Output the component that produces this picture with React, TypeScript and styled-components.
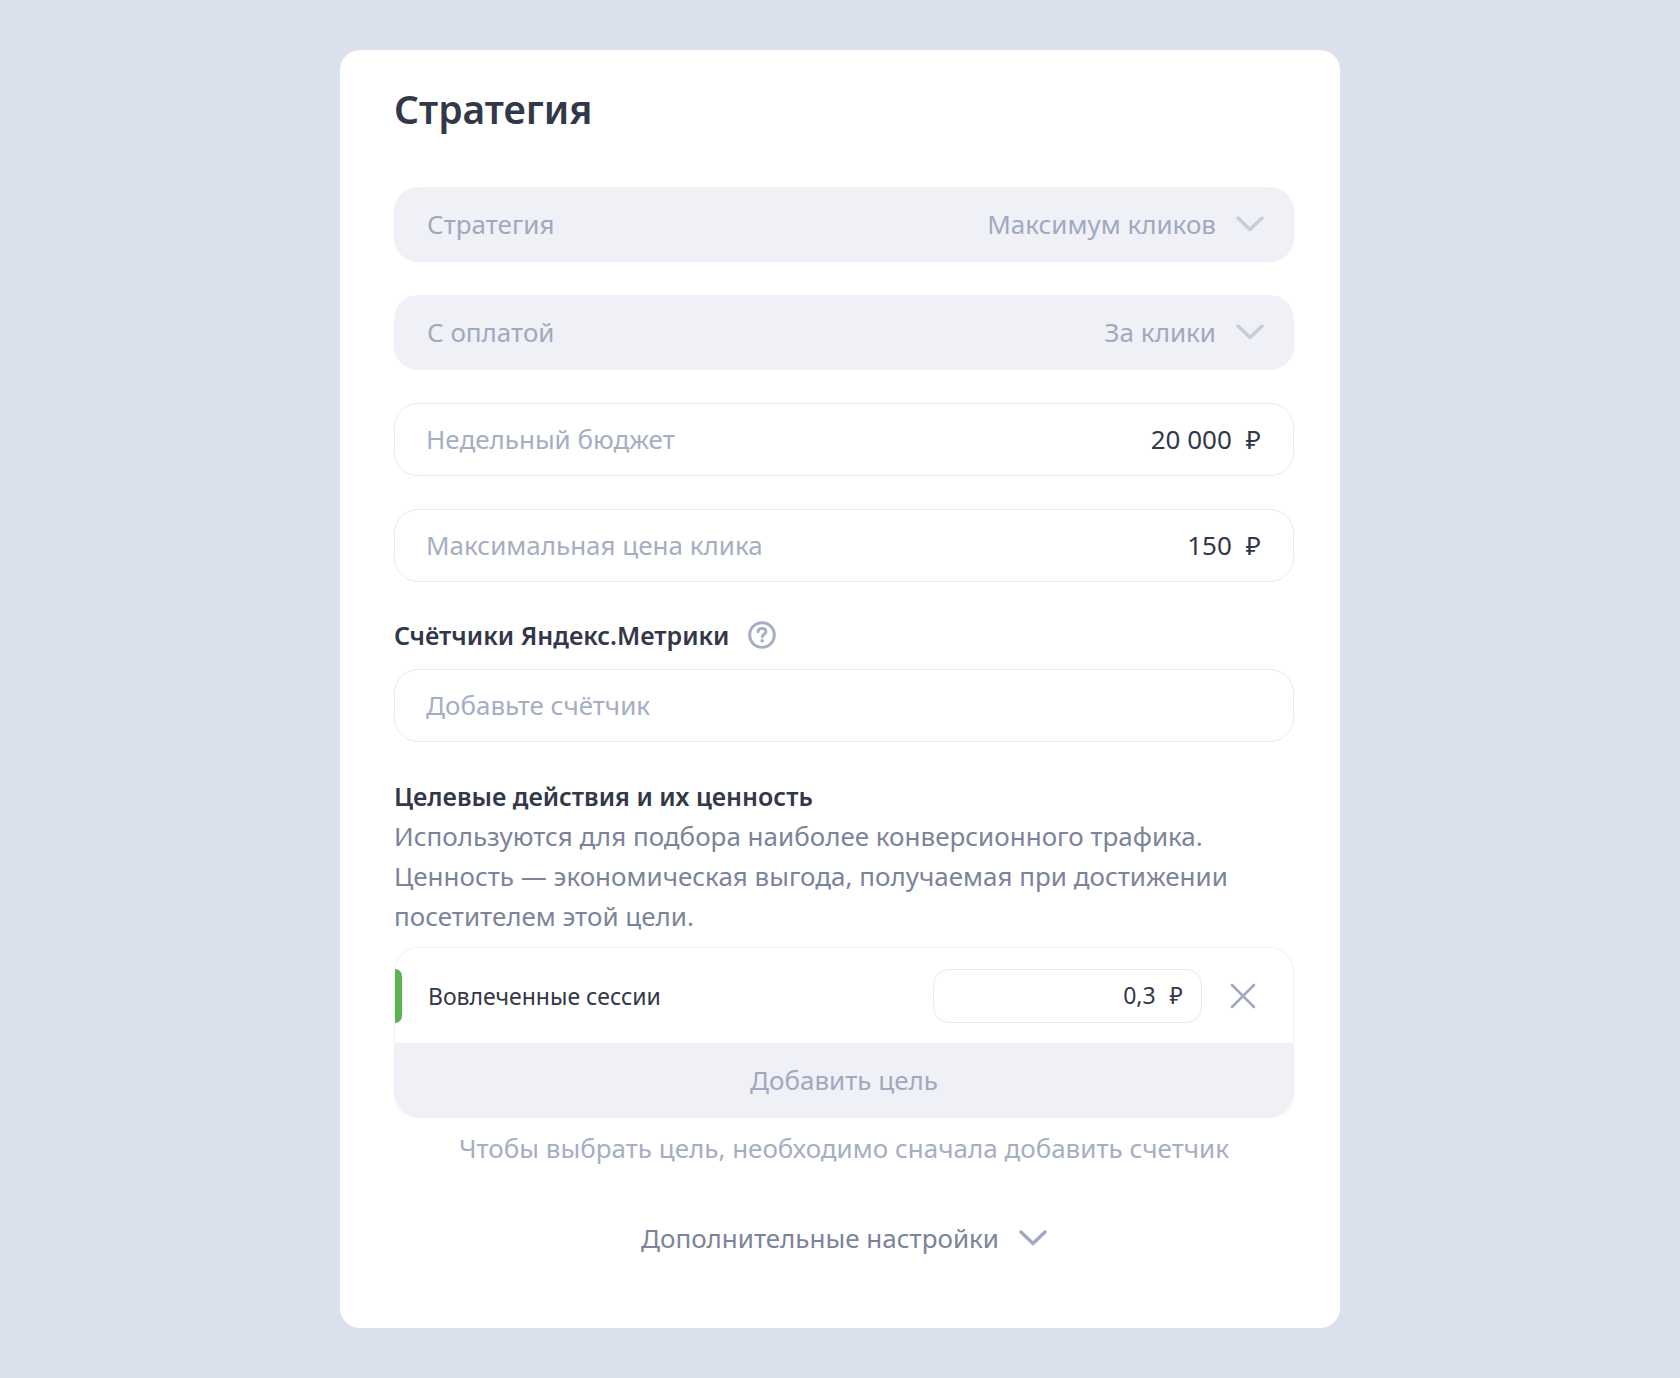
import React, { useState } from 'react';
import styled, { createGlobalStyle } from 'styled-components';

const color = {
  page: '#dae0ec',
  card: '#ffffff',
  fill: '#f0f1f6',
  line: '#e9eaf2',
  text: '#333848',
  body: '#7b849a',
  muted: '#a0a9bf',
  faint: '#a6aec2',
  chevron: '#c5ccda',
  green: '#5bb354',
};

const GlobalStyle = createGlobalStyle`
  *, *::before, *::after {
    box-sizing: border-box;
  }
  body {
    margin: 0;
    background: ${color.page};
    color: ${color.text};
    font-family: 'Noto Sans', 'Open Sans', sans-serif;
    font-size: 26px;
    line-height: 40px;
  }
  button, input, select {
    margin: 0;
    padding: 0;
    border: 0;
    background: none;
    font: inherit;
    color: inherit;
  }
`;

const Page = styled.main`
  padding: 50px 24px;
`;

const Card = styled.form`
  max-width: 1000px;
  margin: 0 auto;
  padding: 34px 46px 70px 54px;
  border-radius: 20px;
  background: ${color.card};
`;

const Heading = styled.h1`
  margin: 0 0 53px;
  font-size: 39px;
  line-height: 50px;
  font-weight: 600;
`;

const Stack = styled.div`
  display: flex;
  flex-direction: column;
  gap: 33px;
`;

const SelectField = styled.div`
  display: flex;
  align-items: center;
  height: 75px;
  padding: 0 30px 2px 33px;
  border-radius: 24px;
  background: ${color.fill};
  color: ${color.muted};
`;

const Select = styled.select`
  flex: 1;
  min-width: 0;
  margin-right: 20px;
  appearance: none;
  text-align-last: right;
  &:disabled {
    color: ${color.muted};
    opacity: 1;
  }
`;

const Field = styled.div`
  display: flex;
  align-items: center;
  height: 73px;
  padding: 0 32px 2px 31px;
  border: 1px solid ${color.line};
  border-radius: 24px;
`;

const FieldLabel = styled.label`
  color: ${color.faint};
`;

const TextInput = styled.input<{ $align?: 'left' | 'right' }>`
  flex: 1;
  width: 0;
  min-width: 0;
  text-align: ${(p) => p.$align ?? 'left'};
  outline: none;
  &::placeholder {
    color: ${color.faint};
    opacity: 1;
  }
`;

const Currency = styled.span`
  margin-left: 14px;
`;

const SectionLabel = styled.div`
  display: flex;
  align-items: center;
  gap: 19px;
  margin: 33px 0 14px;
  font-size: 25px;
  font-weight: 600;
`;

const SectionTitle = styled.h2`
  margin: 34px 0 0;
  font-size: 25px;
  line-height: 40px;
  font-weight: 600;
`;

const Paragraph = styled.p`
  margin: 0 0 11px;
  color: ${color.body};
`;

const IconButton = styled.button`
  display: flex;
  cursor: pointer;
`;

const Goals = styled.div`
  overflow: hidden;
  border: 1px solid ${color.fill};
  border-radius: 24px;
`;

const GoalRow = styled.div`
  display: flex;
  align-items: center;
  padding: 21px 37px 20px 0;
  font-size: 23px;
`;

const GoalMark = styled.span`
  width: 7px;
  height: 54px;
  margin-right: 26px;
  border-radius: 0 7px 7px 0;
  background: ${color.green};
`;

const GoalName = styled.label`
  flex: 1;
`;

const GoalValue = styled.div`
  display: flex;
  align-items: center;
  width: 269px;
  height: 54px;
  margin-right: 28px;
  padding: 0 18px 2px;
  border: 1px solid ${color.line};
  border-radius: 16px;
`;

const AddGoal = styled.button`
  display: block;
  width: 100%;
  height: 74px;
  background: ${color.fill};
  color: ${color.muted};
`;

const Hint = styled.p`
  margin: 10px 0 50px;
  text-align: center;
  color: ${color.faint};
`;

const MoreButton = styled.button`
  display: flex;
  align-items: center;
  gap: 20px;
  margin: 0 auto;
  color: ${color.body};
  cursor: pointer;
`;

const Chevron = ({ stroke }: { stroke: string }) => (
  <svg width="28" height="16" viewBox="0 0 28 16" fill="none" aria-hidden="true">
    <path d="M2 2l12 11.5L26 2" stroke={stroke} strokeWidth="3.4" strokeLinecap="round" strokeLinejoin="round" />
  </svg>
);

const HelpIcon = () => (
  <svg width="28" height="28" viewBox="0 0 28 28" fill="none" aria-hidden="true">
    <circle cx="14" cy="14" r="12.3" stroke={color.faint} strokeWidth="3" />
    <path
      d="M10 10.8c0-2.2 1.7-3.5 4-3.5s4 1.3 4 3.3c0 2.7-3.8 2.6-3.8 5.2"
      stroke={color.faint}
      strokeWidth="2.8"
      strokeLinecap="round"
    />
    <circle cx="14.2" cy="19.7" r="1.8" fill={color.faint} />
  </svg>
);

const CloseIcon = () => (
  <svg width="26" height="26" viewBox="0 0 26 26" fill="none" aria-hidden="true">
    <path d="M2 2l22 22M24 2L2 24" stroke={color.muted} strokeWidth="2.6" strokeLinecap="round" />
  </svg>
);

type ChoiceProps = { id: string; label: string; value: string };

const Choice = ({ id, label, value }: ChoiceProps) => (
  <SelectField>
    <label htmlFor={id}>{label}</label>
    <Select id={id} defaultValue={value} disabled>
      <option value={value}>{value}</option>
    </Select>
    <Chevron stroke={color.chevron} />
  </SelectField>
);

type MoneyProps = { id: string; label: string; initial: string };

const Money = ({ id, label, initial }: MoneyProps) => {
  const [value, setValue] = useState(initial);
  return (
    <Field>
      <FieldLabel htmlFor={id}>{label}</FieldLabel>
      <TextInput
        id={id}
        $align="right"
        inputMode="decimal"
        value={value}
        onChange={(e) => setValue(e.target.value)}
      />
      <Currency>₽</Currency>
    </Field>
  );
};

export default function App() {
  const [goal, setGoal] = useState('0,3');
  return (
    <>
      <GlobalStyle />
      <Page>
        <Card onSubmit={(e) => e.preventDefault()}>
          <Heading>Стратегия</Heading>
          <Stack>
            <Choice id="strategy" label="Стратегия" value="Максимум кликов" />
            <Choice id="payment" label="С оплатой" value="За клики" />
            <Money id="budget" label="Недельный бюджет" initial="20 000" />
            <Money id="max-price" label="Максимальная цена клика" initial="150" />
          </Stack>

          <SectionLabel>
            <label htmlFor="counter">Счётчики Яндекс.Метрики</label>
            <IconButton type="button" aria-label="Справка">
              <HelpIcon />
            </IconButton>
          </SectionLabel>
          <Field>
            <TextInput id="counter" placeholder="Добавьте счётчик" />
          </Field>

          <SectionTitle>Целевые действия и их ценность</SectionTitle>
          <Paragraph>
            Используются для подбора наиболее конверсионного трафика. Ценность — экономическая
            выгода, получаемая при достижении посетителем этой цели.
          </Paragraph>
          <Goals>
            <GoalRow>
              <GoalMark />
              <GoalName htmlFor="goal-value">Вовлеченные сессии</GoalName>
              <GoalValue>
                <TextInput
                  id="goal-value"
                  $align="right"
                  inputMode="decimal"
                  value={goal}
                  onChange={(e) => setGoal(e.target.value)}
                />
                <Currency>₽</Currency>
              </GoalValue>
              <IconButton type="button" aria-label="Удалить цель">
                <CloseIcon />
              </IconButton>
            </GoalRow>
            <AddGoal type="button" disabled>
              Добавить цель
            </AddGoal>
          </Goals>
          <Hint>Чтобы выбрать цель, необходимо сначала добавить счетчик</Hint>

          <MoreButton type="button">
            Дополнительные настройки
            <Chevron stroke={color.muted} />
          </MoreButton>
        </Card>
      </Page>
    </>
  );
}
